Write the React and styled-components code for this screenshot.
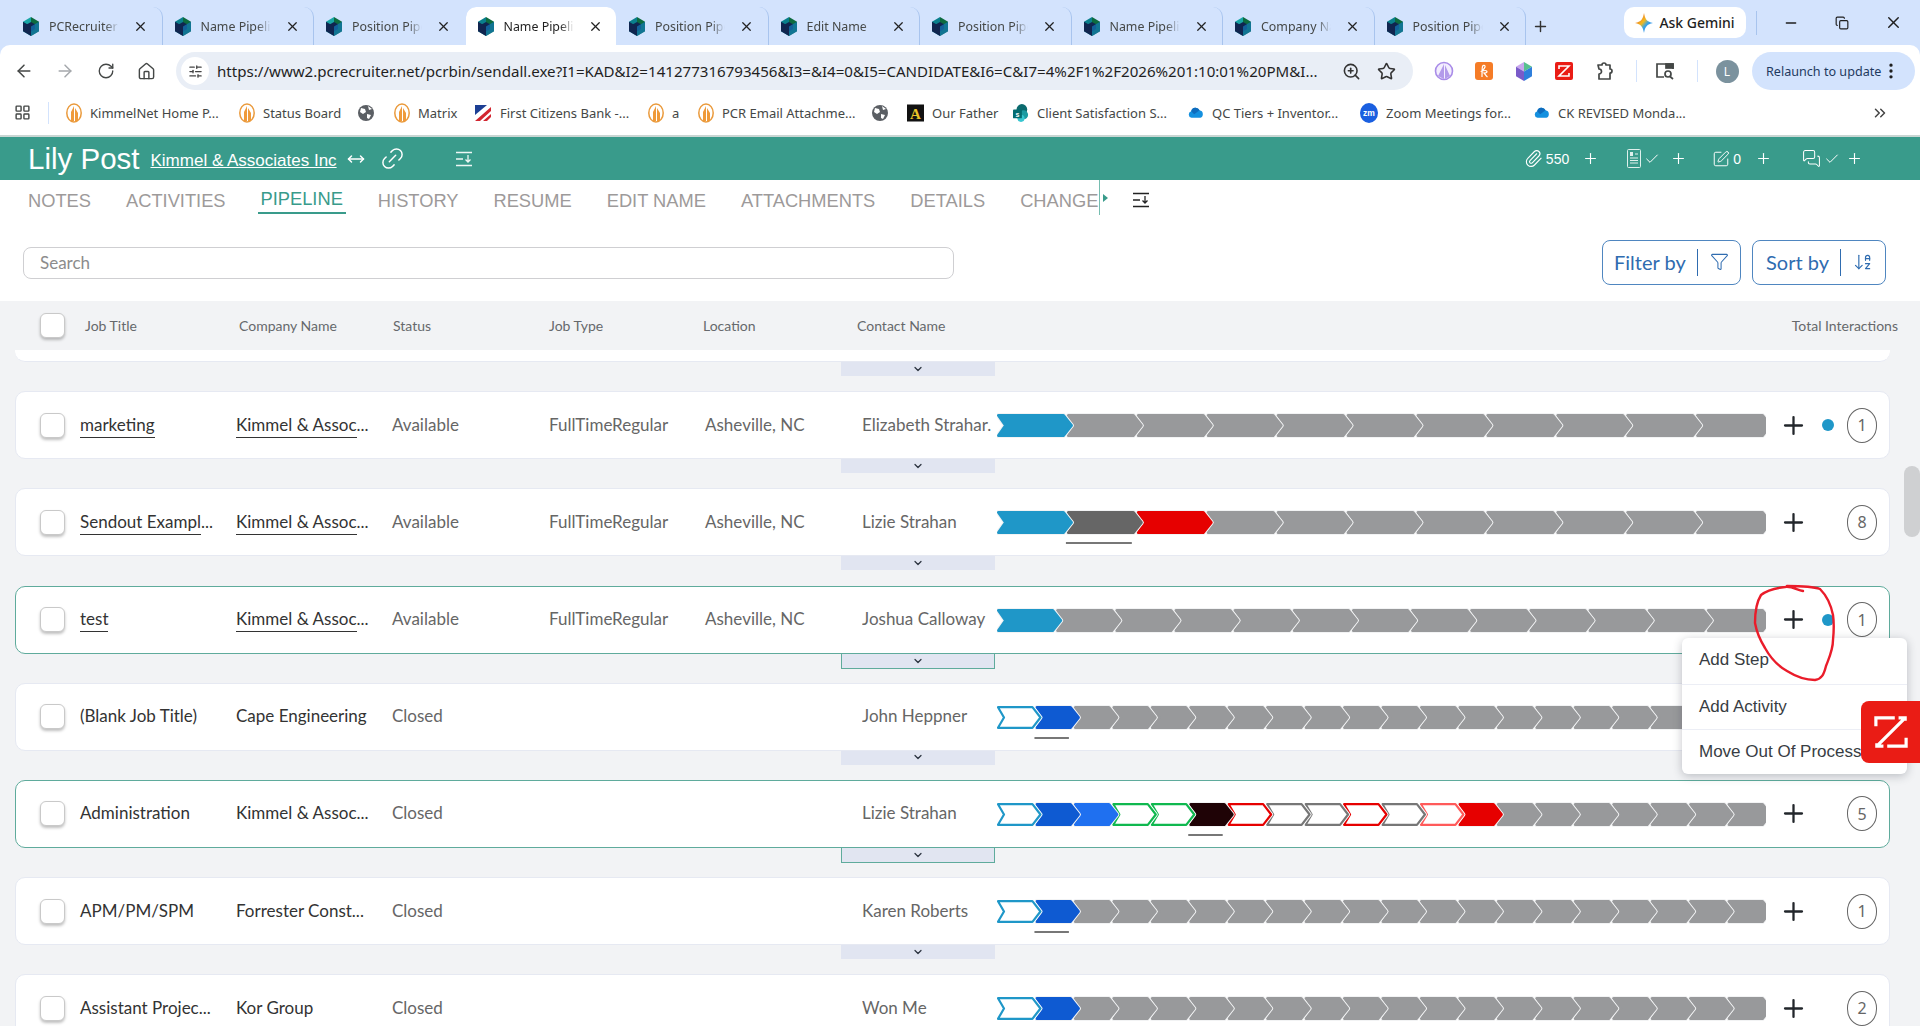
import styled, { createGlobalStyle } from "styled-components";
import {
  ArrowLeft,
  ArrowRight,
  RotateCw,
  House,
  X,
  Plus,
  Minus,
  Copy,
  ZoomIn,
  Star,
  EllipsisVertical,
  SlidersHorizontal,
  LayoutGrid,
  ChevronDown,
  ChevronsRight,
  Paperclip,
  SquarePen,
  MessagesSquare,
  Check,
  Link2,
  MoveHorizontal,
  Funnel,
  ArrowDownAZ,
} from "lucide-react";

const GlobalStyle = createGlobalStyle`
  html, body { margin: 0; padding: 0; background: #fff; }
  * { box-sizing: border-box; }
`;

const chromeFont = `"Noto Sans", "Open Sans", sans-serif`;
const appFont = `Lato, "Open Sans", sans-serif`;
const arial = `"Liberation Sans", Arial, sans-serif`;

const Page = styled.div`
  position: relative;
  width: 1920px;
  height: 1026px;
  overflow: hidden;
  background: #f2f3f5;
  display: flex;
  flex-direction: column;
`;

/* browser chrome */
const Strip = styled.div`
  height: 45px;
  flex: none;
  background: #d3e3fd;
  display: flex;
  align-items: flex-start;
  padding: 7px 0 0 11px;
  font-family: ${chromeFont};
`;
const Tab = styled.div`
  width: 151.5px;
  height: 38px;
  flex: none;
  display: flex;
  align-items: center;
  padding-left: 12px;
  position: relative;
  border-radius: 10px 10px 0 0;
  background: ${(p) => (p.$active ? "#fff" : "transparent")};
  color: ${(p) => (p.$active ? "#1f1f1f" : "#444746")};
  border-right: 1px solid ${(p) => (p.$noSep ? "transparent" : "#a8c4ee")};
  background-clip: padding-box;
`;
const TabTitle = styled.span`
  width: 70px;
  margin-left: 10px;
  font-size: 12.4px;
  white-space: nowrap;
  overflow: hidden;
  mask-image: linear-gradient(90deg, #000 80%, transparent);
`;
const TabClose = styled.span`
  margin-left: 14px;
  display: flex;
  color: #222;
`;
const NewTab = styled.div`
  width: 28px;
  height: 38px;
  display: flex;
  align-items: center;
  justify-content: center;
  color: #333;
`;
const GeminiPill = styled.div`
  margin-left: 70px;
  width: 122px;
  height: 31px;
  border-radius: 10px;
  background: #fff;
  display: flex;
  align-items: center;
  justify-content: center;
  gap: 6px;
  font-size: 14px;
  font-weight: 500;
  color: #1f1f1f;
`;
const StripSep = styled.div`
  width: 1px;
  height: 24px;
  margin: 4px 8px 0 10px;
  background: #a8c4ee;
`;
const WinButton = styled.div`
  width: 51.5px;
  height: 31px;
  display: flex;
  align-items: center;
  justify-content: center;
  color: #1f1f1f;
`;
const ToolbarBack = styled.div`
  background: #d3e3fd;
  flex: none;
`;
const Toolbar = styled.div`
  height: 45px;
  background: #fff;
  border-radius: 10px 10px 0 0;
  display: flex;
  align-items: flex-start;
  padding: 7px 5px 0 3px;
  font-family: ${chromeFont};
`;
const NavButton = styled.div`
  width: 41px;
  height: 38px;
  display: flex;
  align-items: center;
  justify-content: center;
  color: ${(p) => (p.$off ? "#a5a8ac" : "#444746")};
`;
const Address = styled.div`
  margin-left: 9px;
  width: 1237px;
  height: 38px;
  flex: none;
  border-radius: 19px;
  background: #e9eef6;
  display: flex;
  align-items: center;
  padding-left: 5px;
  color: #1f1f1f;
`;
const TuneBadge = styled.span`
  width: 28px;
  height: 28px;
  flex: none;
  border-radius: 50%;
  background: #fff;
  display: flex;
  align-items: center;
  justify-content: center;
  color: #444;
`;
const Url = styled.span`
  margin-left: 8px;
  width: 1117px;
  flex: none;
  font-size: 15.1px;
  white-space: nowrap;
  overflow: hidden;
`;
const AddressIcon = styled.span`
  width: 35px;
  flex: none;
  display: flex;
  justify-content: center;
  color: #333;
`;
const ExtSlot = styled.div`
  width: 40px;
  height: 38px;
  flex: none;
  margin-left: ${(p) => p.$left || 0}px;
  display: flex;
  align-items: center;
  justify-content: center;
`;
const ToolSep = styled.div`
  width: 1px;
  height: 22px;
  margin: 8px ${(p) => p.$right}px 0 ${(p) => p.$left}px;
  background: #d3e3fd;
  flex: none;
`;
const Avatar = styled.span`
  width: 23px;
  height: 23px;
  border-radius: 50%;
  background: #7b929e;
  color: #fff;
  font-size: 12px;
  display: flex;
  align-items: center;
  justify-content: center;
`;
const Relaunch = styled.div`
  margin-left: 5px;
  width: 163px;
  height: 38px;
  flex: none;
  border-radius: 19px;
  background: #d3e3fd;
  display: flex;
  align-items: center;
  padding-left: 14px;
  font-size: 12.6px;
  color: #1f3a5f;
  white-space: nowrap;
`;
const Bookmarks = styled.div`
  height: 47px;
  flex: none;
  background: #fff;
  border-bottom: 2px solid #c9d6d3;
  display: flex;
  align-items: center;
  padding-left: 14px;
  font-family: ${chromeFont};
  font-size: 13px;
  color: #444746;
`;
const BarSep = styled.div`
  width: 1px;
  height: 22px;
  margin: 0 17px 0 17px;
  background: #d3e3fd;
`;
const Bookmark = styled.div`
  width: ${(p) => p.$w}px;
  flex: none;
  display: flex;
  align-items: center;
  gap: 8px;
  white-space: nowrap;
`;
const MoreBookmarks = styled.div`
  margin-left: 157px;
  display: flex;
  color: #444;
`;

/* app header */
const AppBar = styled.div`
  height: 43px;
  flex: none;
  background: #399b8b;
  color: #fff;
  display: flex;
  align-items: center;
  padding: 0 57px 0 28px;
  font-family: ${arial};
`;
const Name = styled.div`
  font-size: 29.5px;
  line-height: 1;
`;
const CompanyLink = styled.a`
  margin: 4px 0 0 11px;
  font-size: 17px;
  color: #fff;
  text-decoration: underline;
`;
const HeadIcon = styled.span`
  display: flex;
  margin-left: ${(p) => p.$left}px;
`;
const ChainIcon = styled(Link2)`
  transform: rotate(-45deg);
`;
const HeadStats = styled.div`
  margin-left: auto;
  display: flex;
  align-items: center;
`;
const Stat = styled.div`
  display: flex;
  align-items: center;
  gap: 3px;
  margin-left: ${(p) => p.$left || 0}px;
  font-size: 14px;
  color: #fff;
`;
const StatPlus = styled.span`
  display: flex;
  margin-left: ${(p) => p.$left}px;
`;
const TabsBar = styled.div`
  height: 35px;
  flex: none;
  background: #fff;
  display: flex;
  font-family: ${arial};
`;
const TabsClip = styled.div`
  width: 1100px;
  height: 35px;
  overflow: hidden;
  border-right: 1px solid #76bdb0;
  padding-left: 25px;
  display: flex;
  gap: 29px;
`;
const PageTab = styled.div`
  height: 34px;
  padding: ${(p) => (p.$active ? "9px" : "11px")} 3px 0;
  font-size: 18.3px;
  line-height: 20px;
  white-space: nowrap;
  color: ${(p) => (p.$active ? "#399b8b" : "#9d9a9a")};
  border-bottom: 2px solid ${(p) => (p.$active ? "#399b8b" : "transparent")};
`;
const MoreTri = styled.span`
  width: 0;
  height: 0;
  margin: 14px 0 0 3px;
  border-left: 5px solid #399b8b;
  border-top: 4px solid transparent;
  border-bottom: 4px solid transparent;
`;
const TabsMenu = styled.span`
  margin: 11px 0 0 24px;
  display: flex;
  color: #222;
`;
const Tools = styled.div`
  height: 86px;
  flex: none;
  background: #fff;
  display: flex;
  padding: 0 34px 0 23px;
  font-family: ${appFont};
`;
const Search = styled.div`
  width: 931px;
  height: 32px;
  margin-top: 32px;
  border: 1px solid #cfcfd2;
  border-radius: 8px;
  padding-left: 16px;
  font-size: 17px;
  line-height: 30px;
  color: #8c8c8c;
`;
const ToolButton = styled.div`
  height: 45px;
  width: ${(p) => p.$w}px;
  margin: 25px 0 0 ${(p) => p.$left};
  border: 1px solid #4f86c0;
  border-radius: 8px;
  display: flex;
  align-items: center;
  padding: 0 0 2px ${(p) => p.$pad}px;
  font-size: 20px;
  color: #2f6cb0;
`;
const ToolDivider = styled.span`
  width: 1px;
  height: 27px;
  margin: 2px 12px 0 11px;
  background: #2f6cb0;
`;

/* table */
const Table = styled.div`
  flex: 1;
  font-family: ${appFont};
`;
const HeaderRow = styled.div`
  height: 49px;
  display: grid;
  grid-template-columns: 45px 154px 154px 156px 154px 154px 1fr auto;
  align-items: center;
  padding: 0 22px 0 40px;
  font-size: 14px;
  color: #66696c;
`;
const Tick = styled.span`
  width: 25px;
  height: 25px;
  display: block;
  border: 1px solid #c9c9c9;
  border-radius: 6px;
  background: #fff;
  box-shadow: 0 2px 3px rgba(0, 0, 0, 0.25);
`;
const PartialRow = styled.div`
  width: 1875px;
  margin-left: 15px;
  height: 12px;
  background: #fff;
  border-radius: 0 0 10px 10px;
  border-bottom: 1px solid #e6e9f2;
`;
const RowWrap = styled.div`
  margin-bottom: 15.2px;
`;
const Row = styled.div`
  width: 1875px;
  height: 68px;
  margin-left: 15px;
  background: #fff;
  border: 1px solid ${(p) => (p.$active ? "#5fab9c" : "#e6e9f2")};
  border-radius: 10px;
  display: grid;
  grid-template-columns: 64px 156px 156px 157px 156px 157px 135px 769px 1fr;
  align-items: center;
  font-size: 17px;
  color: #666;
`;
const RowTick = styled.div`
  margin-left: 24px;
`;
const Cell = styled.span`
  margin-bottom: 2px;
  white-space: nowrap;
`;
const Title = styled(Cell)`
  color: #333;
`;
const Under = styled.span`
  border-bottom: 1px solid #333;
  padding-bottom: 2px;
`;
const Clip = styled.div`
  margin-bottom: 2px;
  white-space: nowrap;
  overflow: hidden;
`;
const Bar = styled.svg`
  align-self: start;
  margin-top: 21px;
  display: block;
`;
const Actions = styled.div`
  display: flex;
  align-items: center;
  height: 100%;
`;
const PlusSlot = styled.span`
  margin-left: 13px;
  width: 29px;
  flex: none;
  display: flex;
  justify-content: center;
  color: #22262b;
`;
const Dot = styled.span`
  width: 12px;
  height: 12px;
  margin-left: 14px;
  border-radius: 50%;
  background: ${(p) => (p.$on ? "#1f97c8" : "transparent")};
`;
const Count = styled.span`
  width: 30px;
  height: 35px;
  margin-left: 13px;
  border: 1px solid #666;
  border-radius: 15px / 17px;
  display: flex;
  align-items: center;
  justify-content: center;
  font-family: "Noto Sans", sans-serif;
  font-size: 16px;
  color: #666;
`;
const Drawer = styled.div`
  width: 154px;
  height: ${(p) => (p.$active ? 15 : 14)}px;
  margin: 0 0 ${(p) => (p.$active ? -1 : 0)}px 841px;
  background: #e1e5f1;
  display: flex;
  align-items: center;
  justify-content: center;
  color: #2c3440;
  border: 1px solid ${(p) => (p.$active ? "#5fab9c" : "#e1e5f1")};
  border-top: none;
`;

/* things lying on top */
const Thumb = styled.div`
  position: absolute;
  left: 1904px;
  top: 466px;
  width: 16px;
  height: 71px;
  border-radius: 8px;
  background: #cfd0d2;
`;
const Menu = styled.div`
  position: absolute;
  left: 1682px;
  top: 638px;
  width: 225px;
  height: 136px;
  background: #fff;
  border-radius: 6px;
  box-shadow: 0 2px 10px rgba(40, 45, 60, 0.28);
  font-family: ${arial};
  font-size: 17px;
  color: #383d43;
`;
const MenuItem = styled.div`
  height: 45.5px;
  padding-left: 17px;
  line-height: 44px;
  white-space: nowrap;
  border-top: ${(p) => (p.$first ? "none" : "1px solid #eceef5")};
`;
const ZohoTab = styled.div`
  position: absolute;
  left: 1861px;
  top: 701px;
  width: 59px;
  height: 62px;
  background: #ea1c15;
  border-radius: 8px 0 0 8px;
  display: flex;
  align-items: center;
  justify-content: center;
`;
const Ink = styled.svg`
  position: absolute;
  left: 0;
  top: 0;
  pointer-events: none;
`;

const PcrIcon = ({ tint = "#0a7f8c" }) => (
  <svg width="16" height="19" viewBox="0 0 16 19">
    <polygon points="8,0 16,4.7 16,14.3 8,19" fill="#0d6b3f" />
    <polygon points="8,0 0,4.7 0,14.3 8,19" fill={tint} />
    <polygon points="8,5 12,7.3 12,12 8,14.5 4,12 4,7.3" fill="#10254f" />
    <polygon points="0,4.7 8,9.5 8,19 0,14.3" fill="#10254f" />
    <polygon points="16,14.3 8,19 8,9.5 16,4.7" fill="#1479b8" opacity="0.7" />
  </svg>
);

const OrangeIcon = () => (
  <svg width="16" height="20" viewBox="0 0 16 20">
    <ellipse cx="8" cy="10" rx="7.2" ry="9" fill="#fff" stroke="#ea9a3c" strokeWidth="1.5" />
    <path d="M8 3 L8 18 L5 18 L5 9Z M9 5 L12 10 L12 18 L9 18Z" fill="#ef9a3a" />
  </svg>
);

const Globe = () => (
  <svg width="16" height="16" viewBox="0 0 16 16">
    <circle cx="8" cy="8" r="8" fill="#5b5f64" />
    <path d="M3 3 L7 4 L8 7 L5 9 L2 7Z M9 9 L13 10 L11 14 L9 13Z M10 1 L14 4 L11 5Z" fill="#fff" />
  </svg>
);

const FlagIcon = () => (
  <svg width="18" height="18" viewBox="0 0 18 18">
    <rect x="1" y="1" width="16" height="16" fill="#fff" />
    <path d="M1 17 L17 3 V7 L6 17Z M9 17 L17 10 V13 L13 17Z" fill="#d22630" />
    <path d="M1 1 H13 L1 11Z" fill="#1c3f94" />
  </svg>
);

const BlackA = () => (
  <svg width="17" height="18" viewBox="0 0 18 18">
    <rect width="18" height="18" fill="#111" />
    <text x="9" y="15" textAnchor="middle" fontSize="16" fontWeight="700" fontFamily="Liberation Serif, serif" fill="#e8c328">
      A
    </text>
  </svg>
);

const SharePoint = () => (
  <svg width="16" height="20" viewBox="0 0 18 20">
    <circle cx="10" cy="6" r="6" fill="#0b6a6e" />
    <circle cx="12" cy="12" r="5" fill="#1a9ba1" />
    <circle cx="9" cy="16" r="4" fill="#37c6d0" />
    <rect x="0" y="6" width="10" height="10" rx="1" fill="#036c70" />
    <text x="5" y="14" textAnchor="middle" fontSize="8" fontWeight="700" fontFamily="Liberation Sans, sans-serif" fill="#fff">
      s
    </text>
  </svg>
);

const Cloud = () => (
  <svg width="16" height="13" viewBox="0 0 18 14">
    <path d="M4 13 A3.8 3.8 0 0 1 3.6 5.6 A5 5 0 0 1 13 4.6 A4.4 4.4 0 0 1 14 13Z" fill="#1490df" />
    <path d="M3.6 5.6 A5 5 0 0 1 13 4.6 L7 9Z" fill="#0f6cbd" />
  </svg>
);

const ZoomBadge = () => (
  <svg width="18" height="20" viewBox="0 0 18 20">
    <ellipse cx="9" cy="10" rx="9" ry="10" fill="#1a5fe0" />
    <text x="9" y="13" textAnchor="middle" fontSize="8.5" fontWeight="700" fontFamily="Liberation Sans, sans-serif" fill="#fff">
      zm
    </text>
  </svg>
);

const GeminiStar = () => (
  <svg width="18" height="20" viewBox="0 0 18 20">
    <defs>
      <linearGradient id="gem" x1="0" y1="0" x2="1" y2="1">
        <stop offset="0" stopColor="#e8483a" />
        <stop offset="0.45" stopColor="#f2b91d" />
        <stop offset="0.6" stopColor="#38a5e8" />
        <stop offset="1" stopColor="#2f6fe6" />
      </linearGradient>
    </defs>
    <path d="M9 0 C10 6 12 9 18 10 C12 11 10 14 9 20 C8 14 6 11 0 10 C6 9 8 6 9 0Z" fill="url(#gem)" />
  </svg>
);

const ExtPeak = () => (
  <svg width="20" height="20" viewBox="0 0 20 20">
    <circle cx="10" cy="10" r="8.5" fill="#f3eefe" stroke="#a98ce8" strokeWidth="1.6" />
    <path d="M10 3 L10 18 L4 15 Z M11 4 L16 15 L11 18Z" fill="#b39bea" />
  </svg>
);

const ExtOrange = () => (
  <svg width="18" height="18" viewBox="0 0 18 18" fill="none" stroke="#fff" strokeWidth="1.2">
    <rect width="18" height="18" rx="3" fill="#f57c27" stroke="none" />
    <path d="M7 15 C7 10 7 6 7.5 4.5 C8 3 10.5 3 10 5 C9.6 6.5 8 8 7 9 C9 8.5 12 8 12 9.5 C12 11 10 11 9 11 C10 12 11 14 12.5 15" />
  </svg>
);

const ExtCube = () => (
  <svg width="16" height="19" viewBox="0 0 16 19">
    <polygon points="8,0 16,4.7 8,9.5" fill="#58c08f" />
    <polygon points="8,0 0,4.7 8,9.5" fill="#c9a7ee" />
    <polygon points="0,4.7 8,9.5 8,19 0,14.3" fill="#7a5bc9" />
    <polygon points="16,4.7 8,9.5 8,19 16,14.3" fill="#2f7fdc" />
  </svg>
);

const ZohoMark = ({ size, stroke }) => (
  <svg width={size} height={size} viewBox="0 0 36 36" fill="none" stroke="#fff" strokeWidth={stroke}>
    <path d="M2 12 V3 H22 M34 24 V33 H14 M33 3 L3 33 M26 3 H33 V6 M3 30 V33 H10" />
  </svg>
);

const ExtZoho = () => (
  <svg width="18" height="18" viewBox="0 0 18 18" fill="none">
    <rect width="18" height="18" rx="2" fill="#ea1c15" />
    <path d="M4 7 V4 H14 L4 14 H14 V11" stroke="#fff" strokeWidth="1.6" />
  </svg>
);

const ExtPuzzle = () => (
  <svg width="20" height="20" viewBox="0 0 20 20" fill="none" stroke="#444746" strokeWidth="1.7">
    <path d="M4 4 H8 A2 2 0 0 1 12 4 H16 V8 A2 2 0 0 1 16 12 V18 H5 V13 A2.4 2.4 0 0 0 5 8 Z" strokeLinejoin="round" />
  </svg>
);

const SidePanelSearch = () => (
  <svg width="20" height="20" viewBox="0 0 20 20" fill="none" stroke="#444746" strokeWidth="1.7">
    <path d="M9 16 H2 V3 H18 V8" />
    <rect x="11" y="3" width="7" height="4" fill="#444746" />
    <circle cx="13" cy="13" r="3" />
    <path d="M15 15.5 L18 18" />
  </svg>
);

const ListArrow = ({ color }) => (
  <svg width="18" height="18" viewBox="0 0 18 18" fill="none" stroke={color} strokeWidth="1.3">
    <path d="M1 2.5 H17 M1 15.5 H17 M1 9 H8 M13 5 V12 M10.5 9.5 L13 12 L15.5 9.5" />
  </svg>
);

const ResumeIcon = () => (
  <svg width="14" height="19" viewBox="0 0 14 19" fill="none" stroke="#dff0ec" strokeWidth="1">
    <rect x="0.5" y="0.5" width="13" height="18" rx="1" />
    <rect x="3" y="3" width="3" height="4" fill="#dff0ec" stroke="none" />
    <path d="M3 9 H11 M3 11.5 H11 M3 14 H11 M8 5 H11" />
  </svg>
);

const SKY = "#1f97c8";
const GRAY = "#98999b";
const DARK = "#666";
const RED = "#e60000";
const NAVY = "#0e5ad2";
const BLUE = "#1f70f0";
const NEAR_BLACK = "#1f0306";

const ol = (color) => ({ color, outline: true });
const fill = (color) => ({ color });

const makeSteps = (first, total) => {
  const steps = [...first];
  while (steps.length < total) steps.push(fill(GRAY));
  return steps;
};

const chevron = (x, w, top, bottom, tip, notch) => {
  const mid = (top + bottom) / 2;
  return `M${x} ${top} H${x + w - tip} L${x + w} ${mid} L${x + w - tip} ${bottom} H${x} L${x + notch} ${mid} Z`;
};

const Pipeline = ({ steps, current }) => {
  const width = 769;
  const pitch = width / steps.length;
  return (
    <Bar width={width} height="36" viewBox={`0 0 ${width} 36`}>
      {steps
        .map((s, i) => {
          const x = i * pitch;
          const w = pitch + 6;
          if (s.outline) {
            return (
              <g key={i}>
                <path d={chevron(x + 1, w - 2, 2, 23, 8, 6)} fill="#fff" stroke="#fff" strokeWidth="4" strokeLinejoin="round" />
                <path d={chevron(x + 1, w - 2, 2.2, 22.8, 8, 6)} fill="#fff" stroke={s.color} strokeWidth="2.2" strokeLinejoin="round" />
              </g>
            );
          }
          return (
            <g key={i}>
              <path d={chevron(x + 1.5, w - 3, 2.5, 22.5, 8, 7)} fill="#f2f3f4" stroke="#f2f3f4" strokeWidth="5" strokeLinejoin="round" />
              <path d={chevron(x + 1.5, w - 3, 2.5, 22.5, 8, 7)} fill={s.color} stroke={s.color} strokeWidth="3" strokeLinejoin="round" />
            </g>
          );
        })
        .reverse()}
      {current !== undefined && (
        <rect x={current * pitch - 1} y="32" width={pitch - 4} height="2" fill="#777" />
      )}
    </Bar>
  );
};

const rows = [
  {
    title: "marketing",
    titleLink: true,
    company: "Kimmel & Assoc",
    more: true,
    status: "Available",
    type: "FullTimeRegular",
    location: "Asheville, NC",
    contact: "Elizabeth Strahar.",
    steps: makeSteps([fill(SKY)], 11),
    dot: true,
    count: 1,
  },
  {
    title: "Sendout Exampl",
    titleMore: true,
    titleLink: true,
    company: "Kimmel & Assoc",
    more: true,
    status: "Available",
    type: "FullTimeRegular",
    location: "Asheville, NC",
    contact: "Lizie Strahan",
    steps: makeSteps([fill(SKY), fill(DARK), fill(RED)], 11),
    current: 1,
    count: 8,
  },
  {
    title: "test",
    titleLink: true,
    company: "Kimmel & Assoc",
    more: true,
    status: "Available",
    type: "FullTimeRegular",
    location: "Asheville, NC",
    contact: "Joshua Calloway",
    steps: makeSteps([fill(SKY)], 13),
    dot: true,
    count: 1,
    active: true,
  },
  {
    title: "(Blank Job Title)",
    company: "Cape Engineering",
    plain: true,
    status: "Closed",
    contact: "John Heppner",
    steps: makeSteps([ol(SKY), fill(NAVY)], 20),
    current: 1,
    count: 1,
  },
  {
    title: "Administration",
    company: "Kimmel & Assoc...",
    plain: true,
    status: "Closed",
    contact: "Lizie Strahan",
    steps: makeSteps(
      [
        ol(SKY),
        fill(NAVY),
        fill(BLUE),
        ol("#0fb84f"),
        ol("#0fb84f"),
        fill(NEAR_BLACK),
        ol(RED),
        ol("#777"),
        ol("#777"),
        ol(RED),
        ol("#777"),
        ol("#ff5a5a"),
        fill(RED),
      ],
      20
    ),
    current: 5,
    count: 5,
    active: true,
  },
  {
    title: "APM/PM/SPM",
    company: "Forrester Const...",
    plain: true,
    status: "Closed",
    contact: "Karen Roberts",
    steps: makeSteps([ol(SKY), fill(NAVY)], 20),
    current: 1,
    count: 1,
  },
  {
    title: "Assistant Projec...",
    company: "Kor Group",
    plain: true,
    status: "Closed",
    contact: "Won Me",
    steps: makeSteps([ol(SKY), fill(NAVY)], 20),
    current: 1,
    count: 2,
  },
];

const browserTabs = [
  { title: "PCRecruiter", tint: "#18a5a5" },
  { title: "Name Pipeline" },
  { title: "Position Pipeline", tint: "#18a5a5" },
  { title: "Name Pipeline", active: true },
  { title: "Position Pipeline" },
  { title: "Edit Name" },
  { title: "Position Pipeline" },
  { title: "Name Pipeline" },
  { title: "Company Name", tint: "#18a5a5" },
  { title: "Position Pipeline" },
];

const bookmarks = [
  { w: 173, icon: <OrangeIcon />, label: "KimmelNet Home P..." },
  { w: 119, icon: <OrangeIcon />, label: "Status Board" },
  { w: 36, icon: <Globe /> },
  { w: 80, icon: <OrangeIcon />, label: "Matrix" },
  { w: 174, icon: <FlagIcon />, label: "First Citizens Bank -..." },
  { w: 50, icon: <OrangeIcon />, label: "a" },
  { w: 174, icon: <OrangeIcon />, label: "PCR Email Attachme..." },
  { w: 35, icon: <Globe /> },
  { w: 106, icon: <BlackA />, label: "Our Father" },
  { w: 175, icon: <SharePoint />, label: "Client Satisfaction S..." },
  { w: 172, icon: <Cloud />, label: "QC Tiers + Inventor..." },
  { w: 174, icon: <ZoomBadge />, label: "Zoom Meetings for..." },
  { w: 180, icon: <Cloud />, label: "CK REVISED Monda..." },
];

const pageTabs = ["NOTES", "ACTIVITIES", "PIPELINE", "HISTORY", "RESUME", "EDIT NAME", "ATTACHMENTS", "DETAILS", "CHANGE"];

const App = () => {
  return (
    <Page>
      <GlobalStyle />
      <Strip>
        {browserTabs.map((t, i) => (
          <Tab key={i} $active={t.active} $noSep={t.active || (browserTabs[i + 1] && browserTabs[i + 1].active)}>
            <PcrIcon tint={t.tint} />
            <TabTitle>{t.title}</TabTitle>
            <TabClose>
              <X size={15} strokeWidth={2} />
            </TabClose>
          </Tab>
        ))}
        <NewTab>
          <Plus size={17} />
        </NewTab>
        <GeminiPill>
          <GeminiStar />
          Ask Gemini
        </GeminiPill>
        <StripSep />
        <WinButton>
          <Minus size={16} />
        </WinButton>
        <WinButton>
          <Copy size={14} strokeWidth={2} />
        </WinButton>
        <WinButton>
          <X size={19} strokeWidth={1.8} />
        </WinButton>
      </Strip>

      <ToolbarBack>
        <Toolbar>
          <NavButton>
            <ArrowLeft size={20} strokeWidth={1.8} />
          </NavButton>
          <NavButton $off>
            <ArrowRight size={20} strokeWidth={1.8} />
          </NavButton>
          <NavButton>
            <RotateCw size={18} strokeWidth={1.8} />
          </NavButton>
          <NavButton>
            <House size={19} strokeWidth={1.8} />
          </NavButton>
          <Address>
            <TuneBadge>
              <SlidersHorizontal size={15} />
            </TuneBadge>
            <Url>https://www2.pcrecruiter.net/pcrbin/sendall.exe?I1=KAD&amp;I2=141277316793456&amp;I3=&amp;I4=0&amp;I5=CANDIDATE&amp;I6=C&amp;I7=4%2F1%2F2026%201:10:01%20PM&amp;I...</Url>
            <AddressIcon>
              <ZoomIn size={19} />
            </AddressIcon>
            <AddressIcon>
              <Star size={19} />
            </AddressIcon>
          </Address>
          <ExtSlot $left={11}>
            <ExtPeak />
          </ExtSlot>
          <ExtSlot>
            <ExtOrange />
          </ExtSlot>
          <ExtSlot>
            <ExtCube />
          </ExtSlot>
          <ExtSlot>
            <ExtZoho />
          </ExtSlot>
          <ExtSlot>
            <ExtPuzzle />
          </ExtSlot>
          <ToolSep $left={12} $right={8} />
          <ExtSlot>
            <SidePanelSearch />
          </ExtSlot>
          <ToolSep $left={12} $right={9} />
          <ExtSlot>
            <Avatar>L</Avatar>
          </ExtSlot>
          <Relaunch>
            Relaunch to update
            <EllipsisVertical size={20} color="#1f1f1f" />
          </Relaunch>
        </Toolbar>
      </ToolbarBack>

      <Bookmarks>
        <LayoutGrid size={17} color="#444746" />
        <BarSep />
        {bookmarks.map((b, i) => (
          <Bookmark key={i} $w={b.w}>
            {b.icon}
            {b.label}
          </Bookmark>
        ))}
        <MoreBookmarks>
          <ChevronsRight size={18} />
        </MoreBookmarks>
      </Bookmarks>

      <AppBar>
        <Name>Lily Post</Name>
        <CompanyLink>Kimmel &amp; Associates Inc</CompanyLink>
        <HeadIcon $left={10}>
          <MoveHorizontal size={18} />
        </HeadIcon>
        <HeadIcon $left={14}>
          <ChainIcon size={27} strokeWidth={1.3} />
        </HeadIcon>
        <HeadIcon $left={49}>
          <ListArrow color="#eef7f5" />
        </HeadIcon>
        <HeadStats>
          <Stat>
            <Paperclip size={19} strokeWidth={1.4} />
            550
            <StatPlus $left={10}>
              <Plus size={17} strokeWidth={1.6} />
            </StatPlus>
          </Stat>
          <Stat $left={28}>
            <ResumeIcon />
            <Check size={16} strokeWidth={1.5} />
            <StatPlus $left={7}>
              <Plus size={17} strokeWidth={1.6} />
            </StatPlus>
          </Stat>
          <Stat $left={25}>
            <SquarePen size={18} strokeWidth={1.3} />
            0
            <StatPlus $left={11}>
              <Plus size={17} strokeWidth={1.6} />
            </StatPlus>
          </Stat>
          <Stat $left={30}>
            <MessagesSquare size={19} strokeWidth={1.3} />
            <Check size={16} strokeWidth={1.5} />
            <StatPlus $left={3}>
              <Plus size={17} strokeWidth={1.6} />
            </StatPlus>
          </Stat>
        </HeadStats>
      </AppBar>

      <TabsBar>
        <TabsClip>
          {pageTabs.map((t) => (
            <PageTab key={t} $active={t === "PIPELINE"}>
              {t}
            </PageTab>
          ))}
        </TabsClip>
        <MoreTri />
        <TabsMenu>
          <ListArrow color="#222" />
        </TabsMenu>
      </TabsBar>

      <Tools>
        <Search>Search</Search>
        <ToolButton $w={139} $left="auto" $pad={11}>
          Filter by
          <ToolDivider />
          <Funnel size={19} strokeWidth={1.3} />
        </ToolButton>
        <ToolButton $w={134} $left="11px" $pad={13}>
          Sort by
          <ToolDivider />
          <ArrowDownAZ size={20} strokeWidth={1.4} />
        </ToolButton>
      </Tools>

      <Table>
        <HeaderRow>
          <Tick />
          <span>Job Title</span>
          <span>Company Name</span>
          <span>Status</span>
          <span>Job Type</span>
          <span>Location</span>
          <span>Contact Name</span>
          <span>Total Interactions</span>
        </HeaderRow>
        <RowWrap>
          <PartialRow />
          <Drawer>
            <ChevronDown size={12} strokeWidth={2.5} />
          </Drawer>
        </RowWrap>
        {rows.map((r) => (
          <RowWrap key={r.title}>
            <Row $active={r.active}>
              <RowTick>
                <Tick />
              </RowTick>
              <Title>
                {r.titleLink ? <Under>{r.title}</Under> : r.title}
                {r.titleMore && "..."}
              </Title>
              <Title>
                {r.plain ? r.company : <Under>{r.company}</Under>}
                {r.more && "..."}
              </Title>
              <Cell>{r.status}</Cell>
              <Cell>{r.type}</Cell>
              <Cell>{r.location}</Cell>
              <Clip>{r.contact}</Clip>
              <Pipeline steps={r.steps} current={r.current} />
              <Actions>
                <PlusSlot>
                  <Plus size={29} strokeWidth={1.9} />
                </PlusSlot>
                <Dot $on={r.dot} />
                <Count>{r.count}</Count>
              </Actions>
            </Row>
            <Drawer $active={r.active}>
              <ChevronDown size={12} strokeWidth={2.5} />
            </Drawer>
          </RowWrap>
        ))}
      </Table>

      <Thumb />
      <Menu>
        <MenuItem $first>Add Step</MenuItem>
        <MenuItem>Add Activity</MenuItem>
        <MenuItem>Move Out Of Process</MenuItem>
      </Menu>
      <ZohoTab>
        <ZohoMark size={34} stroke={3.4} />
      </ZohoTab>
      <Ink width="1920" height="1026" viewBox="0 0 1920 1026" fill="none">
        <path
          d="M1803 591 C1797 590 1792 586 1785 587 C1776 588 1766 591 1761 595 C1756 603 1755 614 1755 623 C1757 634 1760 640 1765 648 C1770 657 1778 666 1787 671 C1795 676 1805 680 1815 680 C1822 679 1824 674 1826 666 C1829 658 1833 650 1833 640 C1834 630 1834 622 1833 615 C1831 605 1826 595 1820 589 C1812 586 1800 586 1787 586"
          stroke="#ea1c2a"
          strokeWidth="2.4"
          strokeLinecap="round"
        />
      </Ink>
    </Page>
  );
};

export default App;
